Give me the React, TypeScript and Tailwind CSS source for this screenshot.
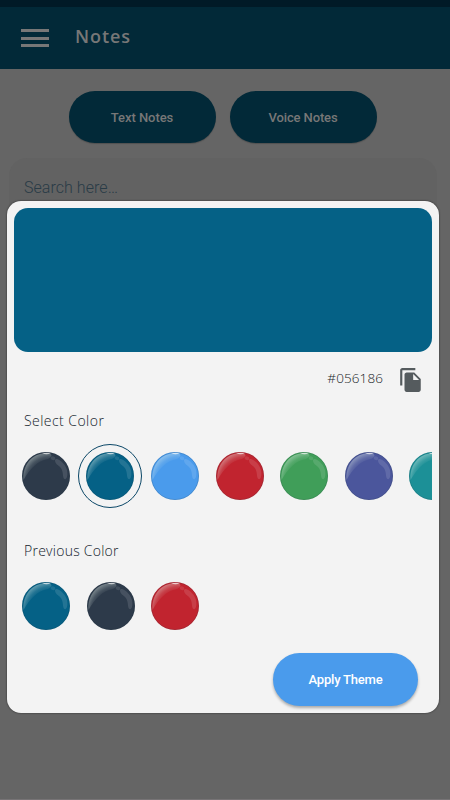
import { useState } from 'react';
import { MdFileCopy } from 'react-icons/md';

const colors = ['#2d3a4a', '#056186', '#4a9bec', '#c1242f', '#409e59', '#4b569c', '#1c9097'];
const previous = ['#056186', '#2d3a4a', '#c1242f'];

function Orb({ color }: { color: string }) {
  return (
    <svg viewBox="0 0 48 48" className="w-12 h-12" aria-hidden="true">
      <defs>
        <radialGradient id={`rim-${color.slice(1)}`} gradientUnits="userSpaceOnUse" cx="28.5" cy="30" r="31">
          <stop offset="0.68" stopColor="#e8f4ec" stopOpacity="0" />
          <stop offset="0.82" stopColor="#e8f4ec" stopOpacity="0.14" />
          <stop offset="1" stopColor="#e8f4ec" stopOpacity="0.45" />
        </radialGradient>
      </defs>
      <circle cx="24" cy="24" r="24" fill={color} />
      <path d="M1.5 28C0.5 13 10 1.2 24 1.2C31 1.2 31 4.5 26 7C15 9 8 17 1.5 28Z" fill={`url(#rim-${color.slice(1)})`} />
      <path d="M20 1.4Q24.5 0 29 1.4Q24.5 3 20 1.4Z" fill="#fff" fillOpacity="0.7" />
      <path d="M35 7C40 9 43.5 13 45 18C46 23 45 28 42.5 27C40.5 26 41.5 21 39.5 17C38 14 34.5 13 33.5 10.5C32.5 8 33 6.5 35 7Z" fill="#fff" fillOpacity="0.12" />
      <ellipse cx="31" cy="6.3" rx="2.4" ry="1.8" transform="rotate(20 31 6.3)" fill="#fff" fillOpacity="0.1" />
      <circle cx="24" cy="24" r="23.6" fill="none" stroke="#203040" strokeOpacity="0.2" strokeWidth="0.8" />
    </svg>
  );
}

export default function App() {
  const [selected, setSelected] = useState('#056186');

  return (
    <div className="relative w-[450px] h-[800px] overflow-hidden bg-[#656565] font-['Roboto',sans-serif]">
      <div className="h-[7px] bg-[#011a27]" />
      <header className="h-[62px] bg-[#022938] flex items-center pl-[21px]">
        <div className="flex flex-col gap-[4.5px] w-7">
          <span className="h-[3px] bg-[#777]" />
          <span className="h-[3px] bg-[#777]" />
          <span className="h-[3px] bg-[#777]" />
        </div>
        <h1 className="ml-[26px] mb-[3px] font-['Open_Sans',sans-serif] text-[18px] font-semibold tracking-[0.9px] text-[#777]">Notes</h1>
      </header>
      <div className="flex justify-center gap-[14px] pt-[22px] pr-[5px]">
        <button className="w-[147px] h-[52px] pt-0.5 rounded-full bg-[#022938] text-[13px] font-medium tracking-[-0.05px] text-[#777] shadow-[0_1px_1px_rgba(0,0,0,0.2)]">Text Notes</button>
        <button className="w-[147px] h-[52px] pt-0.5 rounded-full bg-[#022938] text-[13px] font-medium tracking-[-0.12px] text-[#777] shadow-[0_1px_1px_rgba(0,0,0,0.2)]">Voice Notes</button>
      </div>
      <div className="ml-[9px] mr-[13px] mt-[15px] h-20 rounded-[18px] bg-[#626262] pl-[15px] pt-[18px] text-[16px] font-light leading-6 tracking-[0.05px] text-[#293b46]">Search here…</div>
      <div className="absolute bottom-0 left-0 w-full h-px bg-[#777476]" />

      <div className="absolute left-[7px] top-[201px] w-[432px] h-[512px] rounded-[14px] bg-[#f3f3f3] p-[7px] shadow-[0_0_2px_rgba(0,0,0,0.65)]">
        <div className="h-36 rounded-[14px]" style={{ backgroundColor: selected }} />
        <div className="flex items-center justify-end h-14 pr-2">
          <span className="mr-[15px] mb-[3px] font-['Open_Sans',sans-serif] text-[13.5px] font-light tracking-[0.1px] text-[#182328]">{selected}</span>
          <MdFileCopy className="w-[26px] h-[26px] text-[#555b5e]" />
        </div>
        <h2 className="h-[35px] pl-[10px] pt-px font-['Open_Sans',sans-serif] text-[14px] font-light leading-6 tracking-[0.45px] text-[#12222b]">Select Color</h2>
        <div className="flex h-[66px] w-[418px] overflow-hidden">
          {colors.map((color) => (
            <button key={color} onClick={() => setSelected(color)} className="flex shrink-0 items-center justify-center w-[64.5px] h-[66px]">
              <span className={color === selected ? 'flex shrink-0 items-center justify-center w-16 h-16 mr-px rounded-full border border-[#0b4767]' : 'flex'}>
                <Orb color={color} />
              </span>
            </button>
          ))}
        </div>
        <h2 className="mt-[29px] h-[35px] pl-[10px] pt-px font-['Open_Sans',sans-serif] text-[14px] font-light leading-6 tracking-[0.25px] text-[#12222b]">Previous Color</h2>
        <div className="flex h-[66px]">
          {previous.map((color) => (
            <button key={color} onClick={() => setSelected(color)} className="flex shrink-0 items-center justify-center w-[64.5px] h-[66px]">
              <Orb color={color} />
            </button>
          ))}
        </div>
        <div className="flex justify-end mt-[14px] pr-[14px]">
          <button className="w-[145px] h-[53px] rounded-full bg-[#4a9bec] text-[13px] font-medium tracking-[-0.2px] text-white shadow-[0_2px_3px_rgba(0,0,0,0.3)]">Apply Theme</button>
        </div>
      </div>
    </div>
  );
}
